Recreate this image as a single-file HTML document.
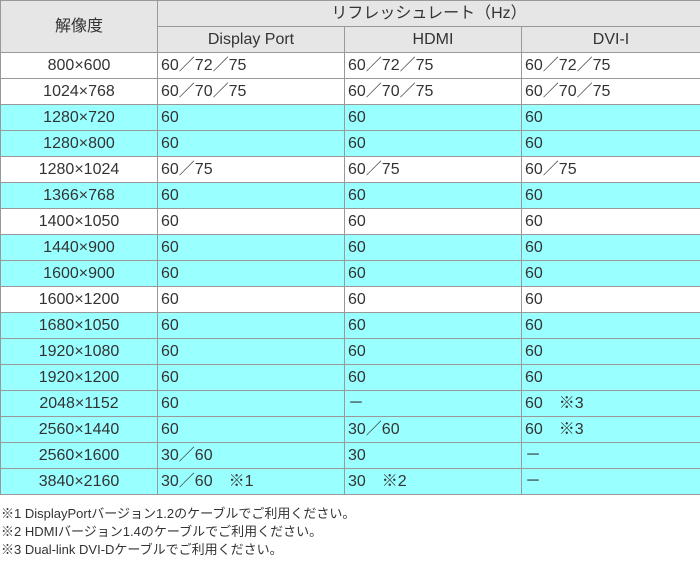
<html><head><style>
body{margin:0;background:#fff;font-family:"Liberation Sans","Noto Sans CJK JP",sans-serif;font-size:13px;color:#333}
table{border-collapse:collapse;table-layout:fixed;width:700px;position:absolute;left:0;top:0}
td,th{border:1px solid #999;height:26px;padding:0 0 0 3px;font-weight:normal;text-align:left;white-space:nowrap;line-height:16px;vertical-align:middle;overflow:hidden}
td span,th span{display:inline-block;height:16px;line-height:16px;vertical-align:top}
th{background:#e6e6e6;text-align:center;padding:0}
td.r{text-align:center;padding:0}
tr.c td{background:#9ff}
.n{position:absolute;left:1px;top:505px;line-height:18px;font-size:13px}
</style></head><body>
<table>
<colgroup><col style="width:157px"><col style="width:187px"><col style="width:177px"><col style="width:179px"></colgroup>
<tr><th rowspan="2">解像度</th><th colspan="3">リフレッシュレート（Hz）</th></tr>
<tr><th>Display Port</th><th>HDMI</th><th>DVI-I</th></tr>
<tr><td class="r">800×600</td><td>60／72／75</td><td>60／72／75</td><td>60／72／75</td></tr>
<tr><td class="r">1024×768</td><td>60／70／75</td><td>60／70／75</td><td>60／70／75</td></tr>
<tr class="c"><td class="r">1280×720</td><td>60</td><td>60</td><td>60</td></tr>
<tr class="c"><td class="r">1280×800</td><td>60</td><td>60</td><td>60</td></tr>
<tr><td class="r">1280×1024</td><td>60／75</td><td>60／75</td><td>60／75</td></tr>
<tr class="c"><td class="r">1366×768</td><td>60</td><td>60</td><td>60</td></tr>
<tr><td class="r">1400×1050</td><td>60</td><td>60</td><td>60</td></tr>
<tr class="c"><td class="r">1440×900</td><td>60</td><td>60</td><td>60</td></tr>
<tr class="c"><td class="r">1600×900</td><td>60</td><td>60</td><td>60</td></tr>
<tr><td class="r">1600×1200</td><td>60</td><td>60</td><td>60</td></tr>
<tr class="c"><td class="r">1680×1050</td><td>60</td><td>60</td><td>60</td></tr>
<tr class="c"><td class="r">1920×1080</td><td>60</td><td>60</td><td>60</td></tr>
<tr class="c"><td class="r">1920×1200</td><td>60</td><td>60</td><td>60</td></tr>
<tr class="c"><td class="r">2048×1152</td><td>60</td><td>－</td><td>60　※3</td></tr>
<tr class="c"><td class="r">2560×1440</td><td>60</td><td>30／60</td><td>60　※3</td></tr>
<tr class="c"><td class="r">2560×1600</td><td>30／60</td><td>30</td><td>－</td></tr>
<tr class="c"><td class="r">3840×2160</td><td>30／60　※1</td><td>30　※2</td><td>－</td></tr>
</table>
<div class="n">※1 DisplayPortバージョン1.2のケーブルでご利用ください。<br>※2 HDMIバージョン1.4のケーブルでご利用ください。<br>※3 Dual-link DVI-Dケーブルでご利用ください。</div>
</body></html>
